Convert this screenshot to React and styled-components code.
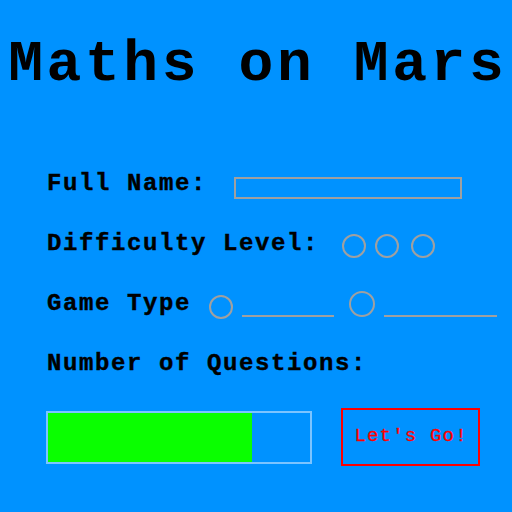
import React from "react";
import styled, { createGlobalStyle } from "styled-components";

const MONO = `"Liberation Mono", "Courier New", monospace`;

const Global = createGlobalStyle`
  html, body { margin: 0; padding: 0; background: #0092ff; }
  body { font-family: ${MONO}; }
`;

const Page = styled.div`
  width: 512px;
  height: 512px;
  background: #0092ff;
  padding-top: 29px;
  box-sizing: border-box;
  overflow: hidden;
`;

const Title = styled.h1`
  margin: 0;
  padding-left: 3.6px;
  font-family: ${MONO};
  font-weight: bold;
  font-size: 58px;
  letter-spacing: 3.6px;
  line-height: 72px;
  text-align: center;
  color: #000;
  white-space: nowrap;
`;

const Form = styled.div`
  display: flex;
  flex-direction: column;
  margin-top: 68px;
  padding-left: 47px;
`;

const Row = styled.div`
  display: flex;
  align-items: flex-start;
  height: ${(p) => p.$h || 60}px;
`;

const Label = styled.span`
  font-family: ${MONO};
  font-weight: bold;
  font-size: 24px;
  letter-spacing: 1.6px;
  line-height: 30px;
  color: #000;
  white-space: pre;
  -webkit-text-stroke: 0.4px #000;
`;

const TextBox = styled.div`
  box-sizing: border-box;
  width: 228px;
  height: 22px;
  margin-left: 27px;
  margin-top: 8px;
  border: 2px solid #a0a0a0;
`;

const Radio = styled.span`
  box-sizing: border-box;
  display: block;
  width: ${(p) => p.$size || 24}px;
  height: ${(p) => p.$size || 24}px;
  border-radius: 50%;
  border: 2px solid #a0a0a0;
  margin-left: ${(p) => p.$ml}px;
  margin-top: ${(p) => p.$mt}px;
`;

const Underline = styled.span`
  display: block;
  width: ${(p) => p.$w}px;
  height: 2px;
  background: #a0a0a0;
  margin-left: 9px;
  margin-top: 26px;
`;

const Bottom = styled.div`
  display: flex;
  align-items: center;
  margin-left: -1px;
`;

const Bar = styled.div`
  box-sizing: border-box;
  width: 266px;
  height: 53px;
  border: 2px solid #7cc4ff;
  display: flex;
`;

const Fill = styled.div`
  height: 100%;
  background: #0aff00;
`;

const Go = styled.button`
  box-sizing: border-box;
  width: 139px;
  height: 58px;
  margin-left: 29px;
  background: transparent;
  border: 2px solid #ff0000;
  color: #ff0000;
  font-family: ${MONO};
  font-size: 19px;
  letter-spacing: 1.2px;
  padding: 0 0 2px 1.2px;
  cursor: pointer;
  -webkit-text-stroke: 0.3px #ff0000;
`;

export default function App() {
  const progress = 0.779;
  return (
    <Page>
      <Global />
      <Title>Maths on Mars</Title>
      <Form>
        <Row>
          <Label>Full Name:</Label>
          <TextBox />
        </Row>
        <Row>
          <Label>Difficulty Level:</Label>
          <Radio $ml={23} $mt={5} />
          <Radio $ml={9} $mt={5} />
          <Radio $ml={12} $mt={5} />
        </Row>
        <Row>
          <Label>Game Type</Label>
          <Radio $ml={18} $mt={6} />
          <Underline $w={92} />
          <Radio $ml={15} $mt={2} $size={26} />
          <Underline $w={113} />
        </Row>
        <Row $h={59}>
          <Label>Number of Questions:</Label>
        </Row>
        <Bottom>
          <Bar>
            <Fill style={{ width: `${progress * 100}%` }} />
          </Bar>
          <Go>Let's Go!</Go>
        </Bottom>
      </Form>
    </Page>
  );
}
